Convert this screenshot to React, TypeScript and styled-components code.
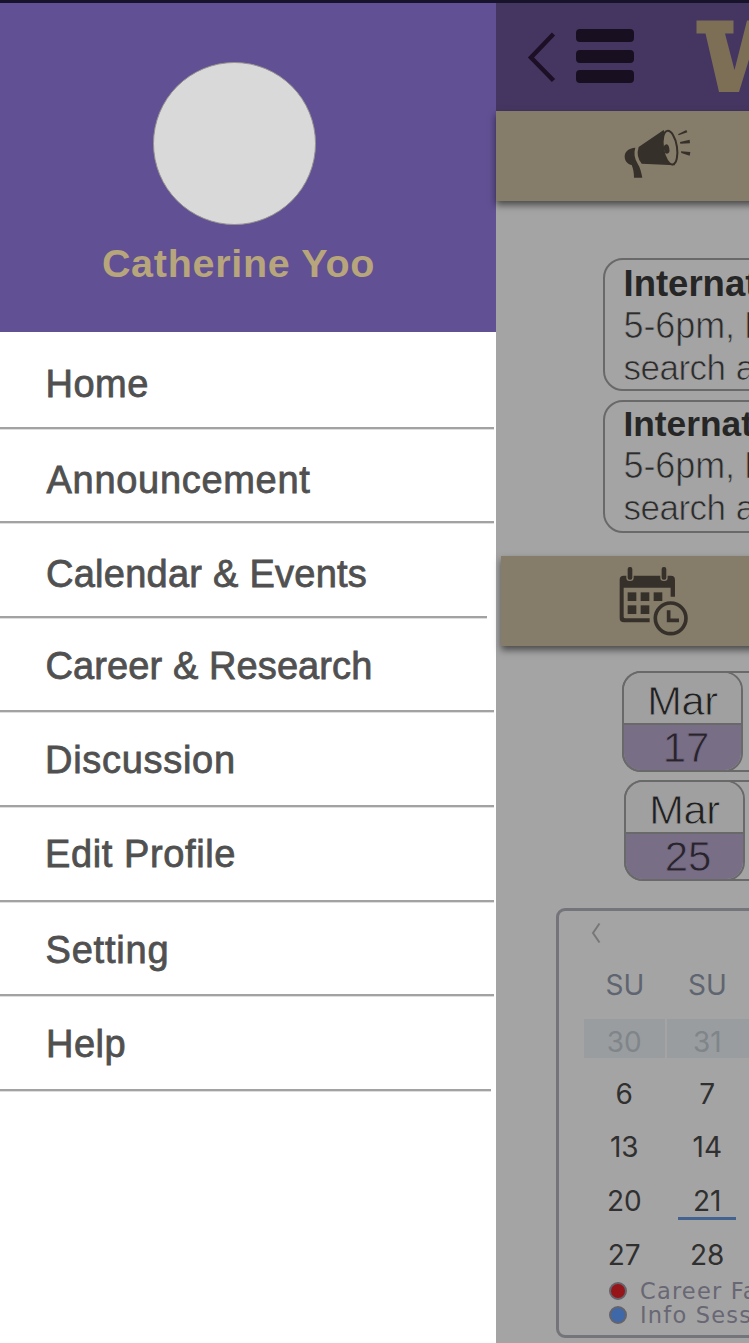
import React from "react";
import styled, { createGlobalStyle } from "styled-components";

const c = {
  purple: "#615093",
  purpleDim: "#453661",
  goldDim: "#867c6a",
  gold: "#b7a57c",
  page: "#a4a4a4",
  line: "#696969",
  icon: "#36302a",
};

const GlobalStyle = createGlobalStyle`
  * { box-sizing: border-box; }
  html, body { margin: 0; padding: 0; background: #fff; }
  body { font-family: "Liberation Sans", Arial, sans-serif; }
  svg { display: block; flex: none; }
`;

const Screen = styled.div`
  width: 749px;
  height: 1343px;
  overflow: hidden;
  display: flex;
  flex-direction: column;
  background: #fff;
`;

const StatusEdge = styled.div`
  flex: none;
  height: 2.5px;
  background: #17132a;
`;

const Body = styled.div`
  flex: 1;
  min-height: 0;
  display: flex;
`;

/* Drawer */

const Drawer = styled.aside`
  flex: none;
  width: 496px;
  background: #fff;
`;

const Profile = styled.header`
  height: 329.8px;
  padding: 59.5px 28px 0 0;
  background: ${c.purple};
  display: flex;
  flex-direction: column;
  align-items: center;
`;

const Avatar = styled.div`
  width: 163px;
  height: 163px;
  flex: none;
  border-radius: 50%;
  background: #d9d9d9;
  border: 1.5px solid #96938f;
`;

const UserName = styled.div`
  margin: 15px 0 0 9px;
  font-size: 39.5px;
  line-height: 46px;
  font-weight: 700;
  letter-spacing: 0.7px;
  white-space: nowrap;
  color: ${c.gold};
`;

const MenuItem = styled.a<{ $h: number; $w: number; $left: number; $bottom: number; $track: number }>`
  display: flex;
  align-items: flex-end;
  height: ${(p) => p.$h}px;
  width: ${(p) => p.$w}px;
  padding: 0 0 ${(p) => p.$bottom}px ${(p) => p.$left}px;
  border-bottom: 2px solid #a2a2a2;
  box-shadow: 0 1px 0 #dedede;
  font-size: 38px;
  line-height: 44px;
  letter-spacing: ${(p) => p.$track}px;
  white-space: nowrap;
  color: #505050;
  -webkit-text-stroke: 0.8px #505050;
`;

/* Page behind the drawer */

const Content = styled.main`
  position: relative;
  width: 253px;
  flex: none;
  display: flex;
  flex-direction: column;
  background: ${c.page};
`;

const TopBar = styled.div`
  flex: none;
  height: 108px;
  display: flex;
  align-items: flex-start;
  background: ${c.purpleDim};
  padding: 17.5px 0 0 30px;
`;

const BackIcon = styled.svg`
  margin-top: 9px;
`;

const Burger = styled.div`
  margin: 9px 0 0 20px;
  width: 58px;
  flex: none;
  display: flex;
  flex-direction: column;
  gap: 7.5px;
`;

const BurgerBar = styled.span`
  height: 13px;
  border-radius: 4px;
  background: #181020;
`;

const Logo = styled.svg`
  margin-left: 62px;
`;

const Banner = styled.div<{ $inset: number; $pad: number; $lift: number }>`
  flex: none;
  height: 90px;
  margin-left: ${(p) => p.$inset}px;
  margin-right: -20px;
  padding-left: ${(p) => p.$pad}px;
  padding-bottom: ${(p) => p.$lift}px;
  display: flex;
  align-items: center;
  background: ${c.goldDim};
  box-shadow: 0 4px 7px rgba(0, 0, 0, 0.55);
`;

const Announcements = styled.section`
  padding: 57px 0 0 106.5px;
  height: 355px;
  display: flex;
  flex-direction: column;
  gap: 8.5px;
`;

const Card = styled.article<{ $top: number }>`
  width: 400px;
  height: 133.5px;
  flex: none;
  padding: ${(p) => p.$top}px 0 0 19px;
  border: 2px solid ${c.line};
  border-radius: 20px;
  white-space: nowrap;
`;

const CardTitle = styled.div<{ $size: number }>`
  font-size: ${(p) => p.$size}px;
  line-height: 42px;
  font-weight: 700;
  color: #262626;
`;

/* A stroke in the background colour thins the letters to a light weight. */
const CardText = styled.div<{ $size: number; $track: number; $word: number }>`
  font-size: ${(p) => p.$size}px;
  letter-spacing: ${(p) => p.$track}px;
  word-spacing: ${(p) => p.$word}px;
  line-height: 42.2px;
  color: #2c2c2c;
  -webkit-text-stroke: 0.7px ${c.page};
`;

const Events = styled.section`
  height: 262px;
  padding-top: 25.5px;
  flex: none;
  display: flex;
  flex-direction: column;
  gap: 8px;
`;

const EventCard = styled.article<{ $left: number }>`
  margin-left: ${(p) => p.$left}px;
  width: 420px;
  height: 101px;
  flex: none;
  border-radius: 19px;
  box-shadow: inset 0 0 0 2px ${c.line};
`;

const DateTile = styled.div`
  width: 121px;
  height: 101px;
  overflow: hidden;
  border: 2px solid ${c.line};
  border-radius: 19px;
  display: flex;
  flex-direction: column;
  font-size: 42px;
  text-align: center;
`;

const Month = styled.div`
  height: 52px;
  padding-left: 1px;
  line-height: 55px;
  font-size: 41.5px;
  letter-spacing: -0.4px;
  background: #a0a0a0;
  color: #202020;
  -webkit-text-stroke: 0.8px #a0a0a0;
  border-bottom: 2px solid ${c.line};
`;

const Day = styled.div`
  flex: 1;
  padding-left: 8px;
  line-height: 45px;
  background: #786e86;
  color: #28232c;
  -webkit-text-stroke: 0.8px #786e86;
`;

const Calendar = styled.section`
  flex: none;
  margin-left: 59.5px;
  width: 420px;
  height: 430px;
  padding: 11px 0 0 25px;
  border: 3px solid #74747b;
  border-radius: 9px;
  font-family: Inter, "Liberation Sans", sans-serif;
`;

const CalendarArrow = styled.svg`
  margin-left: 6px;
`;

const WeekRow = styled.div`
  margin-top: 21px;
  height: 54px;
  display: grid;
  grid-template-columns: 83px 82px;
  font-size: 28px;
  line-height: 40px;
  text-align: center;
  color: #5f6570;
`;

const Dates = styled.div`
  display: grid;
  grid-template-columns: 81.5px 81.5px;
  grid-template-rows: 52.4px 53.5px 53.8px 54px 47px;
  column-gap: 2px;
`;

const DateCell = styled.div<{ $muted?: boolean; $today?: boolean; $shift: number }>`
  height: 39.5px;
  padding-top: 3px;
  padding-right: ${(p) => p.$shift}px;
  font-size: 28px;
  line-height: 40px;
  text-align: center;
  color: ${(p) => (p.$muted ? "#7f8589" : "#303030")};
  background: ${(p) => (p.$muted ? "#999da0" : "transparent")};
  &::after {
    content: "";
    display: ${(p) => (p.$today ? "block" : "none")};
    width: 58px;
    height: 3px;
    margin: -4px 0 0 10.5px;
    background: #43628f;
  }
`;

const Legend = styled.div`
  height: 24px;
  padding-left: 25px;
  display: flex;
  align-items: center;
  gap: 13.5px;
  white-space: nowrap;
  font-family: "DejaVu Sans", sans-serif;
  font-size: 22.5px;
  line-height: 24px;
  letter-spacing: 1.2px;
  color: #686774;
`;

const Dot = styled.span<{ $color: string }>`
  width: 18px;
  height: 18px;
  flex: none;
  border-radius: 50%;
  border: 2px solid #65636b;
  background: ${(p) => p.$color};
`;

const menu = [
  { label: "Home", h: 96.5, w: 494, left: 45.5, bottom: 20.5, track: 0.5 },
  { label: "Announcement", h: 94.5, w: 494, left: 46.5, bottom: 19.5, track: 0.7 },
  { label: "Calendar & Events", h: 94.5, w: 487, left: 46, bottom: 20, track: 0.25 },
  { label: "Career & Research", h: 94.5, w: 494, left: 45.5, bottom: 22.5, track: 0.1 },
  { label: "Discussion", h: 95, w: 494, left: 45, bottom: 23, track: 0.7 },
  { label: "Edit Profile", h: 94.5, w: 494, left: 45, bottom: 23.5, track: 0.6 },
  { label: "Setting", h: 94.5, w: 494, left: 45.5, bottom: 22.5, track: 0.8 },
  { label: "Help", h: 94.5, w: 491, left: 46, bottom: 22.5, track: 0.5 },
];

const announcements = [
  { title: 36.5, top: 3.5 },
  { title: 35.3, top: 1.5 },
];

const events = [
  { month: "Mar", day: "17", left: 125.5 },
  { month: "Mar", day: "25", left: 127.5 },
];

const dates = ["30", "31", "6", "7", "13", "14", "20", "21", "27", "28"];

const Megaphone = () => (
  <svg width="70" height="51.7" viewBox="400 385 210 155">
    <g fill={c.icon}>
      <path d="M447 442 L522 391 L556 497 L456 492 Q438 470 447 442 Z" />
      <path d="M437 444 C416 446 404 456 405 472 C406 486 416 494 426 496 C431 508 433 520 433 534 L458 534 C454 516 452 504 444 492 C434 476 432 460 437 444 Z" />
      <path d="M565 404 L590 391 L593 398 L567 407 Z" />
      <path d="M571 427 L600 420 L601 431 L572 432 Z" />
      <path d="M574 455 L602 457 L600 468 L575 460 Z" />
    </g>
    <ellipse cx="541" cy="444" rx="21" ry="51" transform="rotate(-9 541 444)" fill={c.goldDim} stroke={c.icon} strokeWidth="6" />
    <ellipse cx="531" cy="448" rx="8" ry="14" transform="rotate(-10 531 448)" fill={c.icon} />
  </svg>
);

const CalendarClock = () => (
  <svg width="73.3" height="71.7" viewBox="380 75 220 215">
    <path d="M400 107 H542 Q554 107 554 119 V170 H541 V143 H400 V230 Q400 235 405 235 H478 V247 H401 Q388 247 388 234 V119 Q388 107 400 107 Z" fill={c.icon} />
    <g fill={c.icon} stroke={c.goldDim} strokeWidth="4">
      <rect x="410" y="79" width="18" height="42" rx="8" />
      <rect x="512" y="79" width="18" height="42" rx="8" />
    </g>
    <g fill={c.icon}>
      <rect x="412" y="157" width="26" height="26" />
      <rect x="451" y="157" width="26" height="26" />
      <rect x="490" y="157" width="26" height="26" />
      <rect x="412" y="196" width="26" height="26" />
      <rect x="451" y="196" width="26" height="26" />
    </g>
    <circle cx="541" cy="235" r="46" fill={c.goldDim} stroke={c.icon} strokeWidth="11" />
    <path d="M535 211 V241 H566" fill="none" stroke={c.icon} strokeWidth="11" />
  </svg>
);

export default function App() {
  return (
    <Screen>
      <GlobalStyle />
      <StatusEdge />
      <Body>
        <Drawer>
          <Profile>
            <Avatar />
            <UserName>Catherine Yoo</UserName>
          </Profile>
          <nav>
            {menu.map((m) => (
              <MenuItem key={m.label} $h={m.h} $w={m.w} $left={m.left} $bottom={m.bottom} $track={m.track}>
                {m.label}
              </MenuItem>
            ))}
          </nav>
        </Drawer>
        <Content>
          <TopBar>
            <BackIcon width="30" height="54" viewBox="0 0 30 54" fill="none" stroke="#1c0f26" strokeWidth="4.5">
              <path d="M27.5 5 L5 28.5 L27.5 51.5" />
            </BackIcon>
            <Burger>
              <BurgerBar />
              <BurgerBar />
              <BurgerBar />
            </Burger>
            <Logo width="110" height="72" viewBox="0 0 110 72" fill="#7d6f55">
              <path d="M0.500 0.500 H37.5 V13.5 H29 L38.500 50 L51 0.500 H60 L72 49 L81.5 13.5 H72.5 V0.500 H110 V13.5 H101 L87 72 H67 L55 33 L43 72 H23 L9.500 13.5 H0.500 Z" />
            </Logo>
          </TopBar>
          <Banner $inset={-0.5} $pad={127.5} $lift={3}>
            <Megaphone />
          </Banner>
          <Announcements>
            {announcements.map((a) => (
              <Card key={a.title} $top={a.top}>
                <CardTitle $size={a.title}>Internat</CardTitle>
                <CardText $size={36} $track={-0.1} $word={-1}>5-6pm, I</CardText>
                <CardText $size={35} $track={-0.5} $word={1}>search a</CardText>
              </Card>
            ))}
          </Announcements>
          <Banner $inset={5} $pad={115.5} $lift={0}>
            <CalendarClock />
          </Banner>
          <Events>
            {events.map((e) => (
              <EventCard key={e.day} $left={e.left}>
                <DateTile>
                  <Month>{e.month}</Month>
                  <Day>{e.day}</Day>
                </DateTile>
              </EventCard>
            ))}
          </Events>
          <Calendar>
            <CalendarArrow width="12" height="22" viewBox="0 0 12 22" fill="none" stroke="#777" strokeWidth="2">
              <path d="M9.500 1.500 L3 11 L9.500 20.500" />
            </CalendarArrow>
            <WeekRow>
              <span>SU</span>
              <span>SU</span>
            </WeekRow>
            <Dates>
              {dates.map((d, i) => (
                <DateCell key={d} $muted={i < 2} $today={d === "21"} $shift={i % 2 ? 1 : 0}>
                  {d}
                </DateCell>
              ))}
            </Dates>
            <Legend>
              <Dot $color="#951519" />
              Career Fa
            </Legend>
            <Legend>
              <Dot $color="#3f68a8" />
              Info Sess
            </Legend>
          </Calendar>
        </Content>
      </Body>
    </Screen>
  );
}
